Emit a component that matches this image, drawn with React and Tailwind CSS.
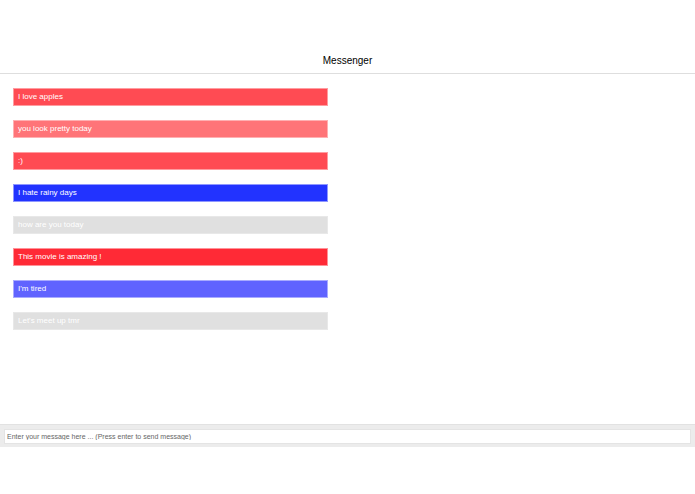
const messages = [
  { text: 'I love apples', cls: 'bg-[#ff4b53] border-[#ff9ca0]' },
  { text: 'you look pretty today', cls: 'bg-[#ff7478] border-[#ffb0b2]' },
  { text: ':)', cls: 'bg-[#ff4b53] border-[#ff9ca0]' },
  { text: 'I hate rainy days', cls: 'bg-[#2233ff] border-[#8f97ff]' },
  { text: 'how are you today', cls: 'bg-[#e0e0e0] border-[#e8e8e8]' },
  { text: 'This movie is amazing !', cls: 'bg-[#ff2a36] border-[#ff9298]' },
  { text: "I'm tired", cls: 'bg-[#6063ff] border-[#a9abff]' },
  { text: "Let's meet up tmr", cls: 'bg-[#e0e0e0] border-[#e8e8e8]' },
]

export default function App() {
  return (
    <div className="w-[695px] h-[494px] bg-white flex flex-col font-['Liberation_Sans',Arial,sans-serif]">
      <div className="h-[74px] shrink-0 border-b border-[#dedede] flex items-end justify-center pb-[6px]">
        <h1 className="text-[10px] leading-[13px] text-black">Messenger</h1>
      </div>

      <div className="h-[350px] shrink-0 flex flex-col gap-[14px] pt-[14px] pl-[13px]">
        {messages.map((m, i) => (
          <div
            key={i}
            className={`w-[315px] h-[18px] border px-[4px] flex items-center text-[8px] text-white ${m.cls}`}
          >
            {m.text}
          </div>
        ))}
      </div>

      <div className="h-[23px] shrink-0 bg-[#ececec] border-t border-[#e2e2e2] px-[4px] flex items-center">
        <input
          autoFocus
          className="block w-full h-[15px] bg-white border border-[#e4e4e4] px-[2px] text-[7px] leading-[13px] outline-none placeholder:text-[#666] caret-black"
          placeholder="Enter your message here ... (Press enter to send message)"
        />
      </div>
    </div>
  )
}
